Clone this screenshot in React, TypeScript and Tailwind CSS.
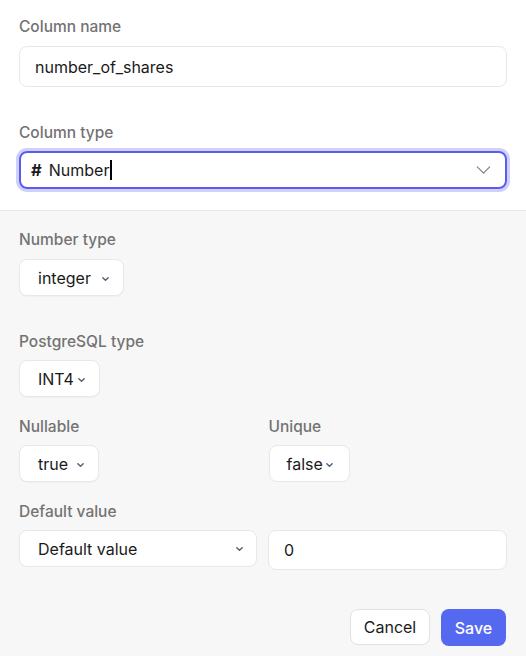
import React from "react";

function Chevron({ className = "" }: { className?: string }) {
  return (
    <svg viewBox="0 0 10 6" className={className} fill="none" stroke="currentColor" strokeWidth="1.6" strokeLinecap="round" strokeLinejoin="round">
      <path d="M2 1.5 L5 4.5 L8 1.5" />
    </svg>
  );
}

function Label({ children }: { children: React.ReactNode }) {
  return <div className="text-[15.5px] leading-5 font-medium text-[#737373]">{children}</div>;
}

function SmallSelect({ value, w }: { value: string; w: string }) {
  return (
    <div className={`relative h-[37px] ${w} flex items-center rounded-lg border border-[#e8e8e8] bg-white pl-[18px] shadow-[0_1px_1px_rgba(0,0,0,0.03)]`}>
      <span className="text-[16px] text-[#1a1a1a]">{value}</span>
      <Chevron className="absolute right-[13px] top-[16px] w-[9px] h-[6px] text-[#5d5d78]" />
    </div>
  );
}

export default function App() {
  return (
    <div className="w-[526px] h-[656px] bg-[#f7f7f7] font-['Inter',sans-serif] antialiased">
      <div className="bg-white px-[19px] pt-[17px] pb-[21px] border-b border-[#e6e6e6]">
        <Label>Column name</Label>
        <div className="mt-[9px] h-[41px] rounded-lg border border-[#e8e8e8] flex items-center pl-[15px] text-[16px] text-[#1a1a1a]">
          number_of_shares
        </div>
        <div className="mt-[36px]">
          <Label>Column type</Label>
        </div>
        <div className="mt-[8px] relative h-[38px] rounded-lg border-2 border-[#5a5cf0] ring-[3px] ring-[#cfd0fb] flex items-center pl-[10px] text-[16px] text-[#1a1a1a]">
          <span className="font-bold text-[16.5px] mr-[7px]">#</span>
          <span>Number</span>
          <span className="ml-[1px] inline-block w-[2px] h-[20px] bg-black" />
          <svg viewBox="0 0 16 9" className="absolute right-[14px] top-[13px] w-[15px] h-[8px] text-[#7a7a7a]" fill="none" stroke="currentColor" strokeWidth="1.2" strokeLinecap="round" strokeLinejoin="round">
            <path d="M1 1 L8 8 L15 1" />
          </svg>
        </div>
      </div>

      <div className="px-[19px] pt-[19px]">
        <Label>Number type</Label>
        <div className="mt-[9px]">
          <SmallSelect value="integer" w="w-[105px]" />
        </div>

        <div className="mt-[36px]">
          <Label>PostgreSQL type</Label>
        </div>
        <div className="mt-[8px]">
          <SmallSelect value="INT4" w="w-[81px]" />
        </div>

        <div className="mt-[20px] grid grid-cols-2 gap-x-[11px]">
          <div>
            <Label>Nullable</Label>
            <div className="mt-[8px]">
              <SmallSelect value="true" w="w-[80px]" />
            </div>
          </div>
          <div>
            <Label>Unique</Label>
            <div className="mt-[8px]">
              <div className="relative h-[37px] w-[81px] flex items-center rounded-lg border border-[#e8e8e8] bg-white pl-[17px]">
                <span className="text-[16px] text-[#1a1a1a]">false</span>
                <Chevron className="absolute right-[15px] top-[16px] w-[9px] h-[6px] text-[#5d5d78]" />
              </div>
            </div>
          </div>
        </div>

        <div className="mt-[20px]">
          <Label>Default value</Label>
        </div>
        <div className="mt-[8px] flex items-start gap-[11px]">
          <div className="relative h-[37px] w-[238px] flex items-center rounded-lg border border-[#e8e8e8] bg-white pl-[18px]">
            <span className="text-[16px] text-[#1a1a1a]">Default value</span>
            <Chevron className="absolute right-[12px] top-[15px] w-[9px] h-[6px] text-[#5d5d78]" />
          </div>
          <div className="h-[40px] flex-1 flex items-center rounded-lg border border-[#e8e8e8] bg-white pl-[15px] text-[16px] text-[#1a1a1a]">
            0
          </div>
        </div>

        <div className="mt-[39px] flex justify-end gap-[11px] pr-[1px]">
          <button className="h-[36px] w-[80px] rounded-lg border border-[#e2e2e2] bg-white text-[16px] text-[#1a1a1a]">
            Cancel
          </button>
          <button className="h-[37px] w-[65px] rounded-lg bg-[#5468f0] text-[16px] font-medium text-white">
            Save
          </button>
        </div>
      </div>
    </div>
  );
}
